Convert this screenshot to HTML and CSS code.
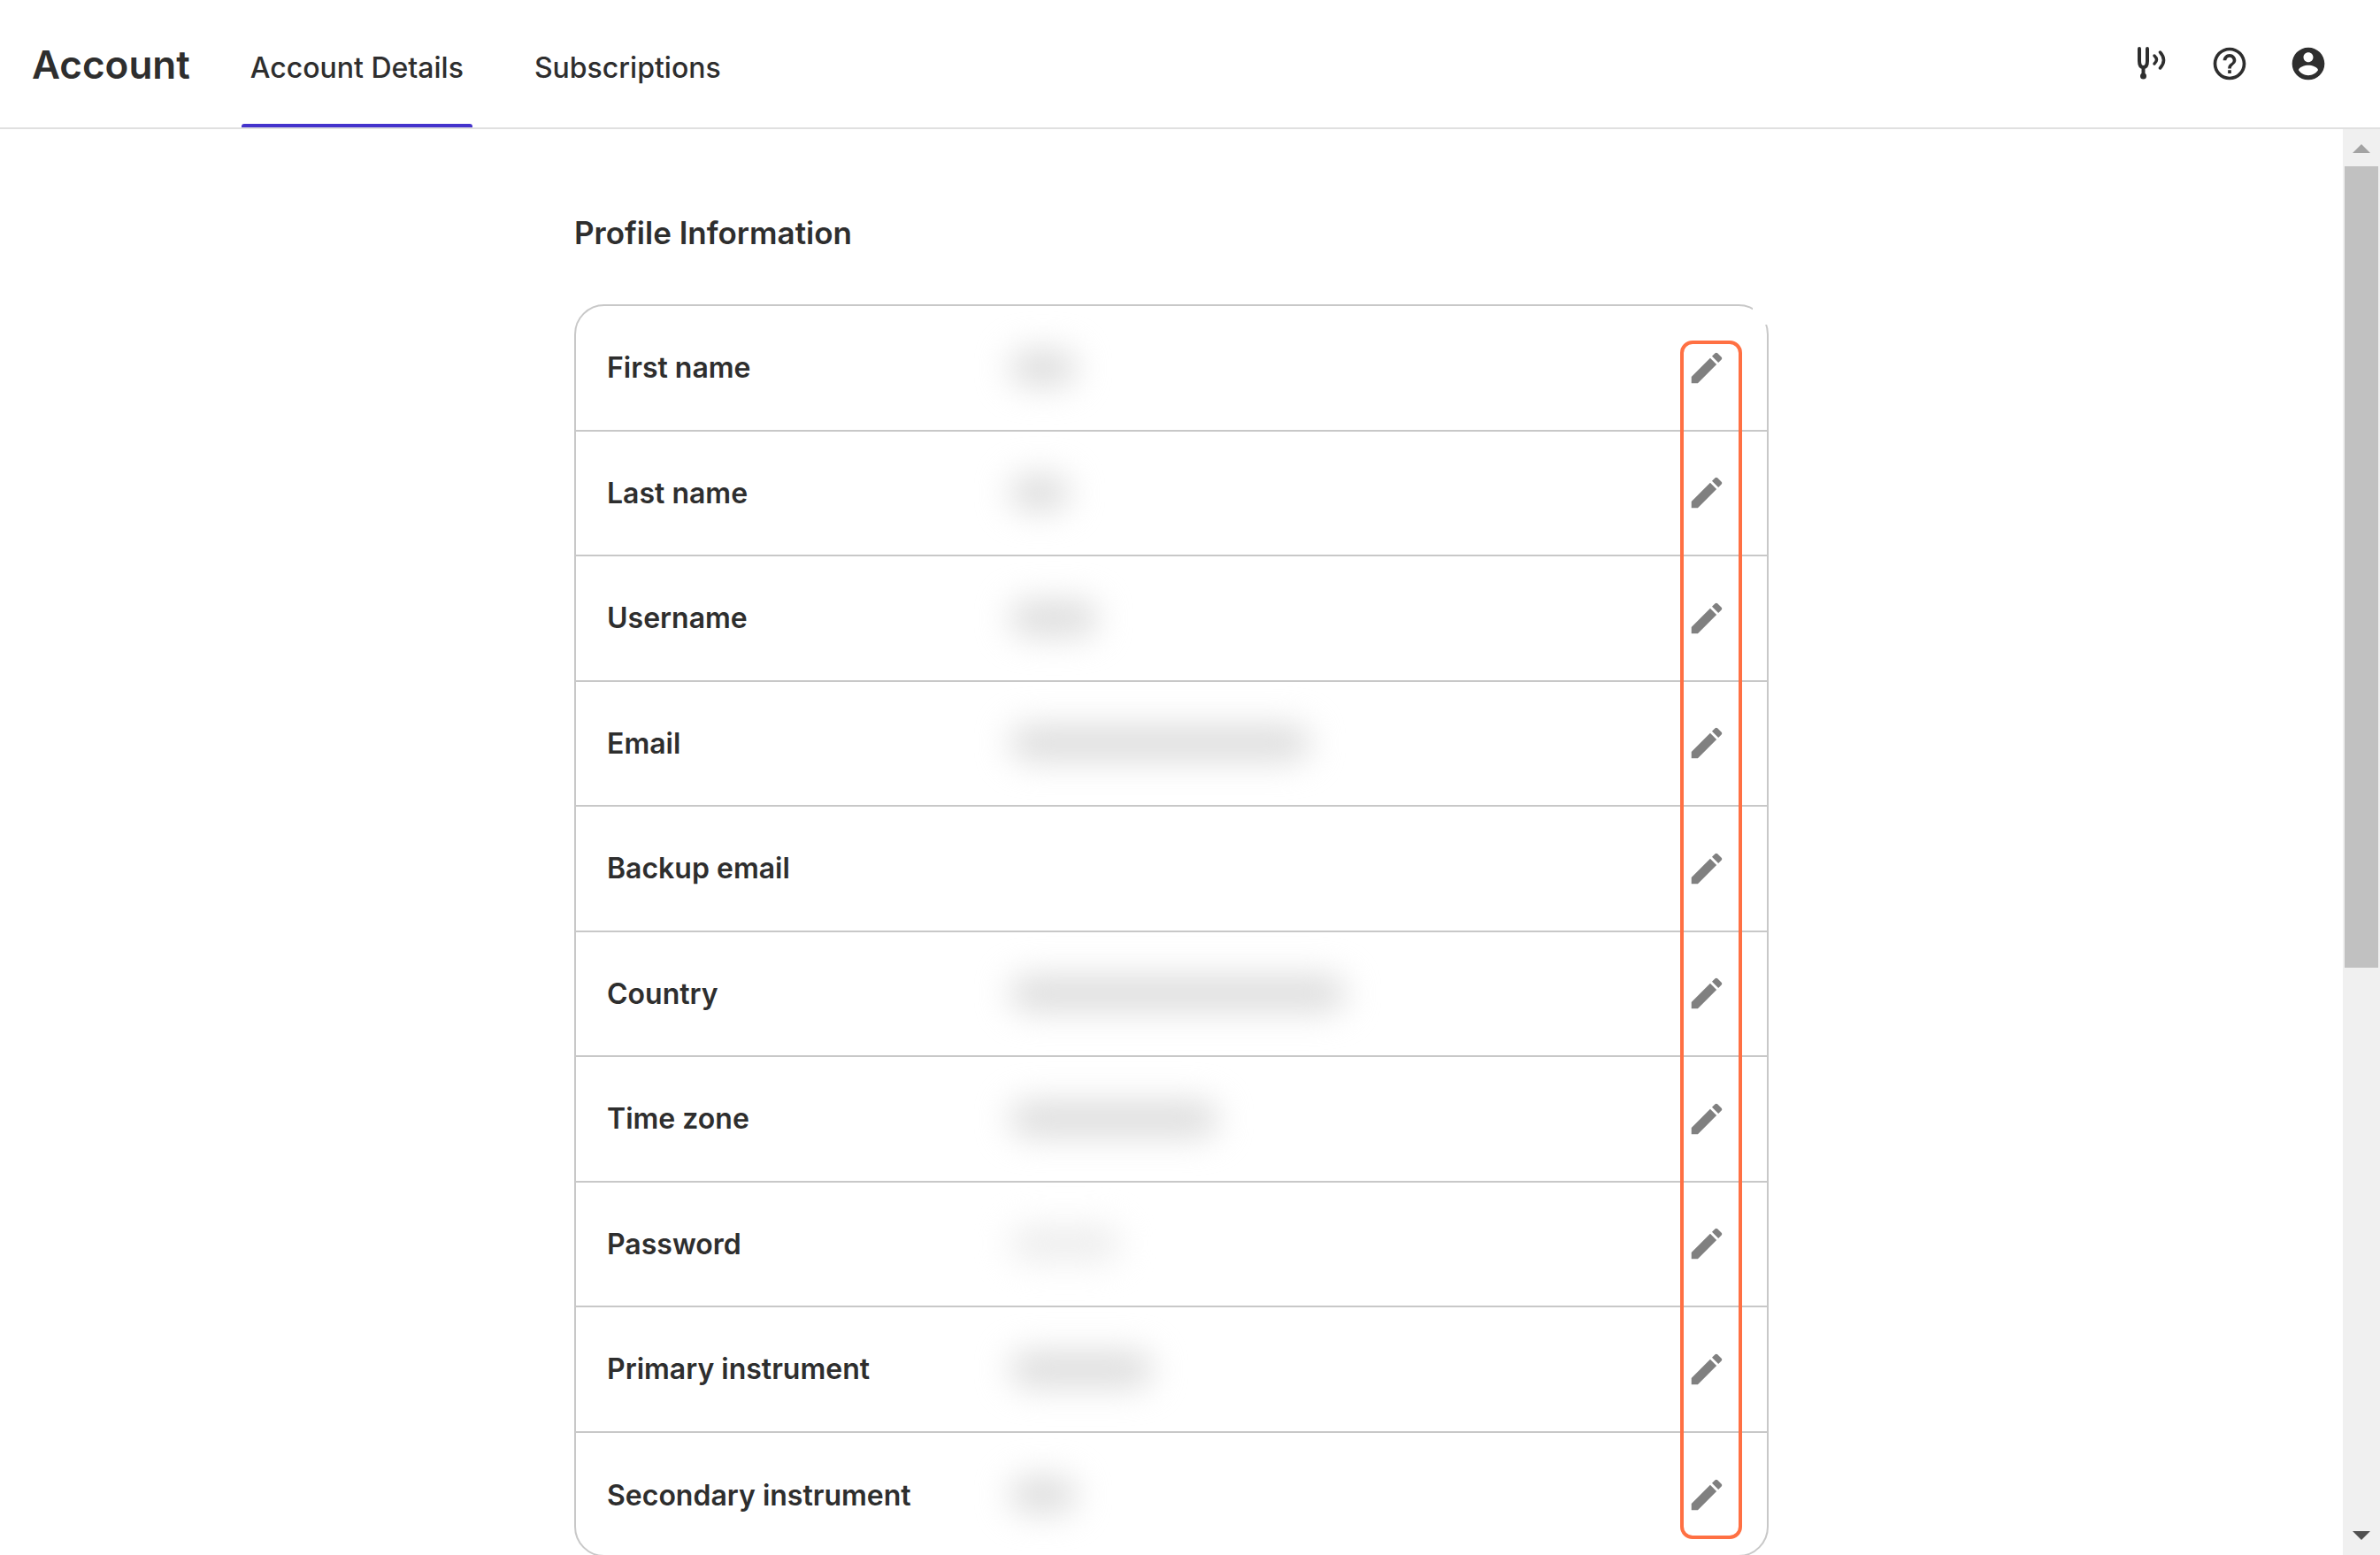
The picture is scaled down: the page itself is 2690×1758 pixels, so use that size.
FILE: index.html
```html
<!DOCTYPE html>
<html lang="en">
<head>
<meta charset="utf-8">
<title>Account</title>
<link rel="stylesheet" href="styles.css">
</head>
<body>
<header class="topbar">
  <h1 class="app-title">Account</h1>
  <nav class="tabs">
    <a class="tab tab-active">Account Details</a>
    <a class="tab">Subscriptions</a>
  </nav>
  <div class="top-icons">
    <svg class="icon-fork" viewBox="0 0 33 38" aria-hidden="true"><path d="M3 2v14q0 7 4.500 7t4.500-7V2" fill="none" stroke="#2e2e2e" stroke-width="4" stroke-linecap="round"/><path d="M7.500 22v11" stroke="#2e2e2e" stroke-width="4"/><circle cx="7.500" cy="33" r="3.500" fill="#2e2e2e"/><path d="M20 10q5 4.500 0 9" fill="none" stroke="#2e2e2e" stroke-width="3.500" stroke-linecap="round"/><path d="M26.500 6q8 9 0 18" fill="none" stroke="#2e2e2e" stroke-width="3.500" stroke-linecap="round"/></svg>
    <svg class="icon" viewBox="0 0 24 24" aria-hidden="true"><path fill="#2e2e2e" d="M11 18h2v-2h-2v2zm1-16C6.480 2 2 6.480 2 12s4.480 10 10 10 10-4.480 10-10S17.520 2 12 2zm0 18c-4.410 0-8-3.590-8-8s3.590-8 8-8 8 3.590 8 8-3.590 8-8 8zm0-14c-2.210 0-4 1.790-4 4h2c0-1.100.9-2 2-2s2 .9 2 2c0 2-3 1.750-3 5h2c0-2.250 3-2.500 3-5 0-2.210-1.790-4-4-4z"/></svg>
    <svg class="icon" viewBox="0 0 24 24" aria-hidden="true"><path fill="#2e2e2e" d="M12 2C6.480 2 2 6.480 2 12s4.480 10 10 10 10-4.480 10-10S17.520 2 12 2zm0 3c1.660 0 3 1.340 3 3s-1.340 3-3 3-3-1.340-3-3 1.340-3 3-3zm0 14.200c-2.500 0-4.710-1.280-6-3.220.03-1.990 4-3.080 6-3.080 1.990 0 5.970 1.090 6 3.080-1.290 1.940-3.500 3.220-6 3.220z"/></svg>
  </div>
</header>
<div class="body-wrap">
  <main class="content">
    <h2 class="section-title">Profile Information</h2>
    <section class="card">
      <span class="corner-fade"></span>
      <span class="highlight"></span>
      <div class="row"><span class="label">First name</span><span class="value-cell"><span class="blur" style="width:76px"></span></span><svg class="edit" viewBox="0 0 24 24"><path d="M3 17.250V21h3.750L17.810 9.940l-3.750-3.750L3 17.250zM20.710 7.040c.39-.39.39-1.020 0-1.410l-2.340-2.340c-.39-.39-1.020-.39-1.410 0l-1.830 1.830 3.750 3.750 1.830-1.830z"/></svg></div>
      <div class="row"><span class="label">Last name</span><span class="value-cell"><span class="blur" style="width:68px"></span></span><svg class="edit" viewBox="0 0 24 24"><path d="M3 17.250V21h3.750L17.810 9.940l-3.750-3.750L3 17.250zM20.710 7.040c.39-.39.39-1.020 0-1.410l-2.340-2.340c-.39-.39-1.020-.39-1.410 0l-1.830 1.830 3.750 3.750 1.830-1.830z"/></svg></div>
      <div class="row"><span class="label">Username</span><span class="value-cell"><span class="blur" style="width:100px"></span></span><svg class="edit" viewBox="0 0 24 24"><path d="M3 17.250V21h3.750L17.810 9.940l-3.750-3.750L3 17.250zM20.710 7.040c.39-.39.39-1.020 0-1.410l-2.340-2.340c-.39-.39-1.020-.39-1.410 0l-1.830 1.830 3.750 3.750 1.830-1.830z"/></svg></div>
      <div class="row"><span class="label">Email</span><span class="value-cell"><span class="blur" style="width:340px"></span></span><svg class="edit" viewBox="0 0 24 24"><path d="M3 17.250V21h3.750L17.810 9.940l-3.750-3.750L3 17.250zM20.710 7.040c.39-.39.39-1.020 0-1.410l-2.340-2.340c-.39-.39-1.020-.39-1.410 0l-1.830 1.830 3.750 3.750 1.830-1.830z"/></svg></div>
      <div class="row"><span class="label">Backup email</span><span class="value-cell"></span><svg class="edit" viewBox="0 0 24 24"><path d="M3 17.250V21h3.750L17.810 9.940l-3.750-3.750L3 17.250zM20.710 7.040c.39-.39.39-1.020 0-1.410l-2.340-2.340c-.39-.39-1.020-.39-1.410 0l-1.830 1.830 3.750 3.750 1.830-1.830z"/></svg></div>
      <div class="row"><span class="label">Country</span><span class="value-cell"><span class="blur" style="width:380px"></span></span><svg class="edit" viewBox="0 0 24 24"><path d="M3 17.250V21h3.750L17.810 9.940l-3.750-3.750L3 17.250zM20.710 7.040c.39-.39.39-1.020 0-1.410l-2.340-2.340c-.39-.39-1.020-.39-1.410 0l-1.830 1.830 3.750 3.750 1.830-1.830z"/></svg></div>
      <div class="row"><span class="label">Time zone</span><span class="value-cell"><span class="blur" style="width:236px"></span></span><svg class="edit" viewBox="0 0 24 24"><path d="M3 17.250V21h3.750L17.810 9.940l-3.750-3.750L3 17.250zM20.710 7.040c.39-.39.39-1.020 0-1.410l-2.340-2.340c-.39-.39-1.020-.39-1.410 0l-1.830 1.830 3.750 3.750 1.830-1.830z"/></svg></div>
      <div class="row"><span class="label">Password</span><span class="value-cell"><span class="blur blur-light" style="width:126px"></span></span><svg class="edit" viewBox="0 0 24 24"><path d="M3 17.250V21h3.750L17.810 9.940l-3.750-3.750L3 17.250zM20.710 7.040c.39-.39.39-1.020 0-1.410l-2.340-2.340c-.39-.39-1.020-.39-1.410 0l-1.830 1.830 3.750 3.750 1.830-1.830z"/></svg></div>
      <div class="row"><span class="label">Primary instrument</span><span class="value-cell"><span class="blur" style="width:162px"></span></span><svg class="edit" viewBox="0 0 24 24"><path d="M3 17.250V21h3.750L17.810 9.940l-3.750-3.750L3 17.250zM20.710 7.040c.39-.39.39-1.020 0-1.410l-2.340-2.340c-.39-.39-1.020-.39-1.410 0l-1.830 1.830 3.750 3.750 1.830-1.830z"/></svg></div>
      <div class="row"><span class="label">Secondary instrument</span><span class="value-cell"><span class="blur" style="width:76px"></span></span><svg class="edit" viewBox="0 0 24 24"><path d="M3 17.250V21h3.750L17.810 9.940l-3.750-3.750L3 17.250zM20.710 7.040c.39-.39.39-1.020 0-1.410l-2.340-2.340c-.39-.39-1.020-.39-1.410 0l-1.830 1.830 3.750 3.750 1.830-1.830z"/></svg></div>
    </section>
  </main>
  <aside class="scrollbar">
    <span class="arrow-up"></span>
    <span class="thumb"></span>
    <span class="arrow-down"></span>
  </aside>
</div>
</body>
</html>
```

FILE: styles.css
```css
* { box-sizing: border-box; }
html, body { height: 100%; margin: 0; }
body {
  display: flex;
  flex-direction: column;
  overflow: hidden;
  background: #fff;
  color: #2e2e2e;
  font-family: Inter, "Liberation Sans", sans-serif;
}
.topbar {
  display: flex;
  flex: none;
  align-items: stretch;
  height: 146px;
  padding-left: 36px;
  border-bottom: 2px solid #e0e0e0;
}
.app-title {
  margin: 0 58px 0 0;
  align-self: center;
  padding-top: 2px;
  font-size: 44px;
  font-weight: 600;
  line-height: 1;
}
.tabs { display: flex; gap: 60px; }
.tab {
  position: relative;
  display: flex;
  align-items: center;
  padding: 8px 10px 0;
  font-size: 32px;
  font-weight: 500;
}
.tab-active::after {
  content: "";
  position: absolute;
  left: 0;
  right: 0;
  bottom: 0;
  height: 4px;
  background: #4433cc;
  border-radius: 3px 3px 0 0;
}
.top-icons {
  display: flex;
  align-items: center;
  gap: 45px;
  margin-left: auto;
  padding: 0 59px 0 0;
  height: 144px;
}
.icon { display: block; width: 44px; height: 44px; }
.icon-fork { display: block; width: 33px; height: 38px; margin-right: 5px; }
.body-wrap { display: flex; flex: 1; min-height: 0; }
.content { flex: 1; min-width: 0; padding: 95px 0 0 649px; }
.section-title {
  margin: 0 0 59px;
  font-size: 35px;
  font-weight: 600;
  line-height: 44px;
}
.card {
  position: relative;
  width: 1350px;
  height: 1416px;
  border: 2px solid #c8c8c8;
  border-radius: 34px;
}
.corner-fade {
  position: absolute;
  top: -3px;
  right: -3px;
  width: 19px;
  height: 24px;
  background: #fff;
}
.highlight {
  position: absolute;
  top: 39px;
  left: 1248px;
  width: 70px;
  height: 1355px;
  border: 4px solid #ff7043;
  border-radius: 14px;
}
.row {
  display: flex;
  align-items: center;
  height: 141.500px;
  padding: 0 30px 0 35px;
  border-bottom: 2px solid #c8c8c8;
}
.row:last-of-type { border-bottom: 0; }
.label {
  flex: none;
  width: 455px;
  font-size: 32px;
  font-weight: 600;
}
.value-cell { display: flex; flex: 1; align-items: center; }
.blur {
  display: block;
  height: 42px;
  background: #dedede;
  border-radius: 21px;
  filter: blur(18px);
}
.blur-light { background: #eeeeee; }
.edit { flex: none; width: 46px; height: 46px; margin-right: 15px; fill: #808080; }
.scrollbar {
  display: flex;
  flex: none;
  flex-direction: column;
  align-items: center;
  width: 42px;
  padding: 17px 2px;
  background: #f0f0f0;
}
.arrow-up, .arrow-down {
  flex: none;
  width: 0;
  height: 0;
  border-left: 10px solid transparent;
  border-right: 10px solid transparent;
}
.arrow-up { border-bottom: 10px solid #a3a3a3; }
.arrow-down { margin-top: auto; border-top: 10px solid #505050; }
.thumb { flex: none; width: 38px; height: 906px; margin-top: 15px; background: #c1c1c1; }
```
